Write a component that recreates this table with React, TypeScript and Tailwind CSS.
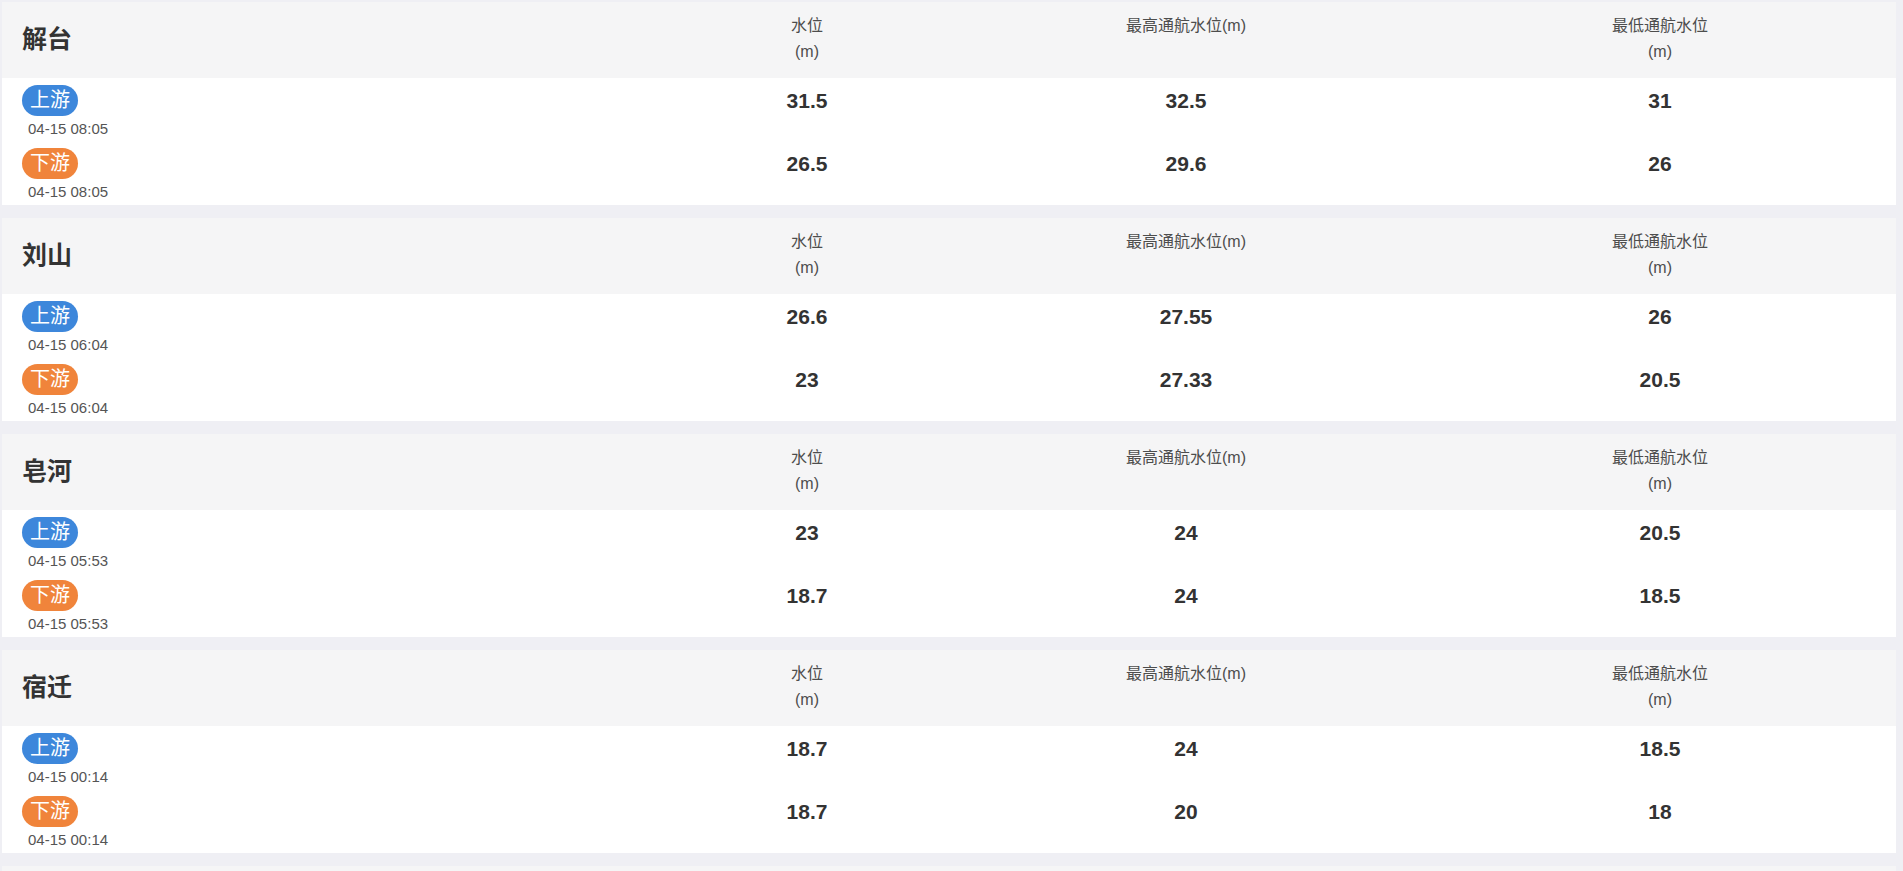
import React from "react";

type Reading = {
  time: string;
  level: string;
  high: string;
  low: string;
};

type Station = {
  name: string;
  up: Reading;
  down: Reading;
};

const stations: Station[] = [
  {
    name: "解台",
    up: { time: "04-15 08:05", level: "31.5", high: "32.5", low: "31" },
    down: { time: "04-15 08:05", level: "26.5", high: "29.6", low: "26" },
  },
  {
    name: "刘山",
    up: { time: "04-15 06:04", level: "26.6", high: "27.55", low: "26" },
    down: { time: "04-15 06:04", level: "23", high: "27.33", low: "20.5" },
  },
  {
    name: "皂河",
    up: { time: "04-15 05:53", level: "23", high: "24", low: "20.5" },
    down: { time: "04-15 05:53", level: "18.7", high: "24", low: "18.5" },
  },
  {
    name: "宿迁",
    up: { time: "04-15 00:14", level: "18.7", high: "24", low: "18.5" },
    down: { time: "04-15 00:14", level: "18.7", high: "20", low: "18" },
  },
];

const font = {
  fontFamily: '"Liberation Sans", Arial, "Noto Sans CJK SC", sans-serif',
};

function ReadingRow({ kind, reading }: { kind: "up" | "down"; reading: Reading }) {
  return (
    <div className="grid grid-cols-[664px_282px_476px_1fr] items-start pt-[7px]">
      <div className="pl-[20px]">
        <span
          className={
            kind === "up"
              ? "inline-block h-[31px] rounded-full bg-[#3d87db] px-2 text-[20px] leading-[31px] text-white"
              : "inline-block h-[31px] rounded-full bg-[#f0843b] px-2 text-[20px] leading-[31px] text-white"
          }
        >
          {kind === "up" ? "上游" : "下游"}
        </span>
        <div className="pl-[6px] text-[15px] leading-[25px] text-[#555]">{reading.time}</div>
      </div>
      <div className="text-center text-[21px] font-bold leading-[31px] text-[#333]">{reading.level}</div>
      <div className="text-center text-[21px] font-bold leading-[31px] text-[#333]">{reading.high}</div>
      <div className="text-center text-[21px] font-bold leading-[31px] text-[#333]">{reading.low}</div>
    </div>
  );
}

function StationCard({ station }: { station: Station }) {
  return (
    <div className="h-[203px] overflow-hidden bg-white">
      {/* header */}
      <div className="grid h-[76px] grid-cols-[664px_282px_476px_1fr] bg-[#f5f5f6]">
        <div className="flex items-center pl-[20px] text-[25px] font-bold text-[#333]">{station.name}</div>
        <div className="pt-[11px] text-center text-[16px] leading-[26px] text-[#4d4d4d]">
          水位
          <br />
          (m)
        </div>
        <div className="pt-[11px] text-center text-[16px] leading-[26px] text-[#4d4d4d]">最高通航水位(m)</div>
        <div className="pt-[11px] text-center text-[16px] leading-[26px] text-[#4d4d4d]">
          最低通航水位
          <br />
          (m)
        </div>
      </div>

      {/* readings */}
      <ReadingRow kind="up" reading={station.up} />
      <ReadingRow kind="down" reading={station.down} />
    </div>
  );
}

export default function App() {
  return (
    <div className="h-screen overflow-hidden bg-[#efeff4] pl-[2px] pr-[7px] pt-[2px]" style={font}>
      <div className="flex flex-col gap-[13px]">
        {stations.map((s) => (
          <StationCard key={s.name} station={s} />
        ))}
        {/* next card, only its header edge shows */}
        <div className="h-[76px] bg-[#f5f5f6]" />
      </div>
    </div>
  );
}
